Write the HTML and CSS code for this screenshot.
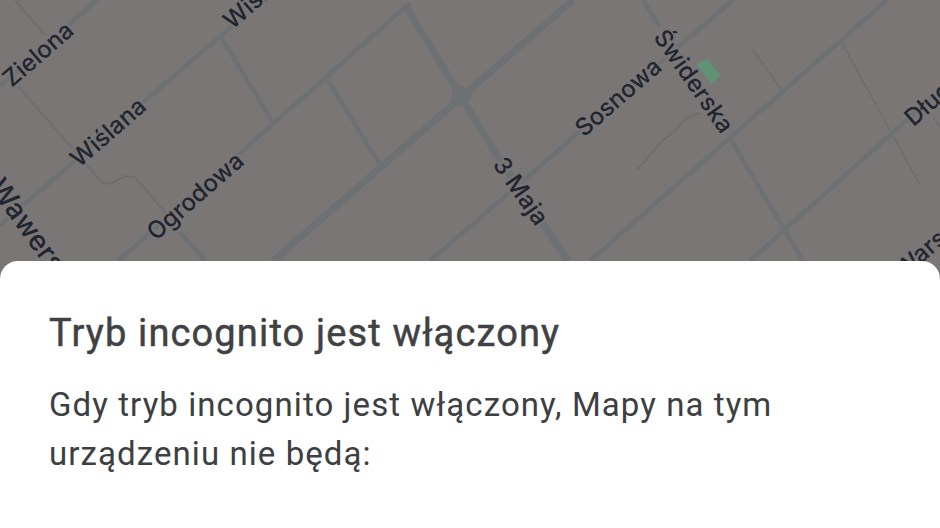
FILE: index.html
```html
<!DOCTYPE html>
<html lang="pl">
<head>
    <meta charset="utf-8">
    <title>Tryb incognito</title>
    <link rel="stylesheet" href="styles.css">
</head>
<body>
    <div class="map">
        <svg class="map-canvas" width="940" height="262" viewBox="0 0 940 262">
            <!-- thin paths -->
            <g class="path">
                <polyline points="15,0 45,35"/>
                <polyline points="18,86 100,180 105,184 112,183 125,176 135,177 165,212"/>
                <polyline points="637,170 663,140 673,133 687,118 700,113"/>
                <polyline points="753,50 782,90"/>
                <polyline points="842,43 920,185"/>
                <polyline points="933,117 940,127"/>
            </g>
            <!-- side streets -->
            <g class="road">
                <polyline points="0,86 97,0"/>
                <polyline points="0,225 245,15"/>
                <polyline points="118,261 410,3"/>
                <polyline points="220,35 273,123"/>
                <polyline points="328,80 380,165"/>
                <polyline points="180,232 205,261"/>
                <polyline points="430,261 733,0"/>
                <polyline points="590,261 887,0"/>
                <polyline points="750,261 940,90"/>
                <polyline points="643,0 660,27"/>
                <polyline points="730,138 803,261"/>
            </g>
            <!-- main streets -->
            <g class="road road-main">
                <polyline points="273,261 573,0"/>
                <polyline points="405,5 460,95 498,157 568,261"/>
            </g>
            <circle class="roundabout" cx="461" cy="96" r="10"/>
            <polygon class="park" points="696,64 707,59 720,75 711,84"/>
            <g class="labels">
                <text transform="translate(38 54) rotate(-41)">Zielona</text>
                <text transform="translate(108 132) rotate(-41)">Wiślana</text>
                <text transform="translate(261 -6) rotate(-41)">Wiślana</text>
                <text transform="translate(195 196) rotate(-41)">Ogrodowa</text>
                <text class="label-big" transform="translate(37 238) rotate(54)">Wawerska</text>
                <text transform="translate(521 191) rotate(55)">3 Maja</text>
                <text transform="translate(618 97) rotate(-41)">Sosnowa</text>
                <text transform="translate(694 81) rotate(55)">Świderska</text>
                <text transform="translate(933 99) rotate(-41)">Długa</text>
                <text transform="translate(953 225) rotate(-41)">Warszawska</text>
            </g>
        </svg>
    </div>
    <div class="sheet">
        <h1 class="sheet-title">Tryb incognito jest włączony</h1>
        <p class="sheet-text">Gdy tryb incognito jest włączony, Mapy na tym urządzeniu nie będą:</p>
    </div>
</body>
</html>
```

FILE: styles.css
```css
html,
body {
    margin: 0;
    height: 100%;
}

body {
    width: 940px;
    height: 528px;
    overflow: hidden;
    display: flex;
    flex-direction: column;
    background-color: #7a7676;
    font-family: Roboto, "Liberation Sans", sans-serif;
}

.map {
    height: 261px;
    flex: none;
}

.map-canvas {
    display: block;
}

.path polyline {
    fill: none;
    stroke: #6b6d6e;
    stroke-width: 1.5;
}

.road polyline {
    fill: none;
    stroke: #6e7174;
    stroke-width: 4.5;
}

.road-main polyline {
    stroke-width: 7;
}

.roundabout {
    fill: #6e7174;
}

.park {
    fill: #5f9373;
}

.labels text {
    font-family: Inter, "Liberation Sans", sans-serif;
    font-size: 24px;
    font-weight: 500;
    fill: #20252f;
    stroke: #7a7676;
    stroke-width: 4px;
    paint-order: stroke;
    text-anchor: middle;
    dominant-baseline: central;
}

.labels .label-big {
    font-size: 28px;
}

.sheet {
    flex: 1;
    background-color: #fff;
    border-radius: 18px 18px 0 0;
    padding: 49px 49px 0;
}

.sheet-title {
    margin: 0 0 24px;
    font-size: 38px;
    line-height: 46px;
    font-weight: 400;
    letter-spacing: 1.15px;
    -webkit-text-stroke: 0.5px #3f4245;
    color: #3f4245;
}

.sheet-text {
    margin: 0;
    width: 780px;
    font-size: 33px;
    line-height: 49px;
    letter-spacing: 1.08px;
    color: #3c4043;
}
```
